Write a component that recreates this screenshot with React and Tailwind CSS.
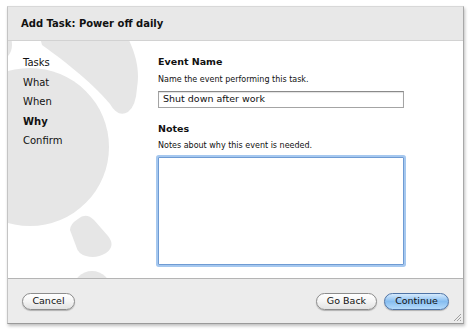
import React from 'react';

const steps = [
  { label: 'Tasks' },
  { label: 'What' },
  { label: 'When' },
  { label: 'Why', active: true },
  { label: 'Confirm' },
];

function Watermark() {
  return (
    <svg className="absolute left-0 top-0" width="455" height="237" viewBox="0 0 455 237">
      <g transform="translate(-8,-41)" fill="#e6e6e6">
        <circle cx="30" cy="147" r="79" />
        <path d="M 38 30 L 42 45 C 60 58, 90 80, 110 104 Q 118 118 128 112 Q 136 106 137 88 C 140 70, 136 55, 128 38 L 126 30 Z" />
        <path d="M 0 30 L 11 38 Q 14 49 8 56 L 0 56 Z" />
        <path d="M 78 219 Q 86 212 94 220 L 108 236 Q 116 246 106 253 Q 96 259 86 256 Q 78 254 76 246 L 70 230 Q 70 224 78 219 Z" />
        <circle cx="92" cy="290" r="19" />
      </g>
    </svg>
  );
}

function Button({ children, primary, width }) {
  return (
    <button
      className={`h-[17px] ${width} rounded-full border text-[9.5px] leading-none text-[#111] flex items-center justify-center shadow-[0_1px_1px_rgba(0,0,0,0.25)] ${
        primary
          ? 'border-[#4f74a6] bg-gradient-to-b from-[#d6eafc] via-[#86bdf0] to-[#b5dbfb]'
          : 'border-[#8c8c8c] bg-gradient-to-b from-white via-[#f4f4f4] to-[#e2e2e2]'
      }`}
    >
      {children}
    </button>
  );
}

export default function App() {
  return (
    <div className="w-[470px] h-[336px] bg-white pt-[6px] pl-[7px] font-['DejaVu_Sans',sans-serif] text-[#111]">
      <div className="w-[457px] h-[318px] border border-t-[#d8d8d8] border-l-[#c4c4c4] border-r-[#a8a8a8] border-b-[#9a9a9a] shadow-[1px_2px_3px_rgba(0,0,0,0.25)] flex flex-col">
        <div className="h-[34px] shrink-0 bg-[#e8e8e8] border-b border-[#d2d2d2] pl-[13px] flex items-center">
          <h1 className="text-[10px] font-bold">Add Task: Power off daily</h1>
        </div>

        <div className="h-[237px] shrink-0 bg-white relative overflow-hidden flex">
          <Watermark />
          <nav className="relative w-[150px] shrink-0 pl-[15px] pt-[12px] flex flex-col">
            {steps.map(step => (
              <span
                key={step.label}
                className={`text-[10px] leading-[19.5px] ${step.active ? 'font-bold' : ''}`}
              >
                {step.label}
              </span>
            ))}
          </nav>

          <div className="relative pt-[14px] flex flex-col">
            <h2 className="text-[9.5px] leading-[14px] font-bold">Event Name</h2>
            <p className="mt-[5px] text-[8px] leading-[12px]">Name the event performing this task.</p>
            <div className="mt-[5px] w-[246px] h-[17px] border border-[#a4a4a4] border-t-[#8a8a8a] bg-white shadow-[inset_0_1px_1px_rgba(0,0,0,0.12)] pl-[4px] flex items-center text-[9.5px]">
              Shut down after work
            </div>

            <h2 className="mt-[14px] text-[9.5px] leading-[14px] font-bold">Notes</h2>
            <p className="mt-[4px] text-[8px] leading-[12px]">Notes about why this event is needed.</p>
            <div className="mt-[5px] w-[246px] h-[108px] border border-[#6f9bd3] rounded-[1px] bg-white ring-2 ring-[#a6c8ef]" />
          </div>
        </div>

        <div className="relative flex-1 bg-[#ececec] border-t border-[#b4b4b4] px-[14px] flex items-center justify-between">
          <Button width="w-[53px]">Cancel</Button>
          <div className="flex gap-[7px]">
            <Button width="w-[61px]">Go Back</Button>
            <Button width="w-[65px]" primary>Continue</Button>
          </div>
          <svg className="absolute right-[1px] bottom-[1px]" width="10" height="10" viewBox="0 0 10 10">
            <path d="M 9 2 L 2 9 M 9 5 L 5 9 M 9 8 L 8 9" stroke="#a0a0a0" strokeWidth="1" />
          </svg>
        </div>
      </div>
    </div>
  );
}
